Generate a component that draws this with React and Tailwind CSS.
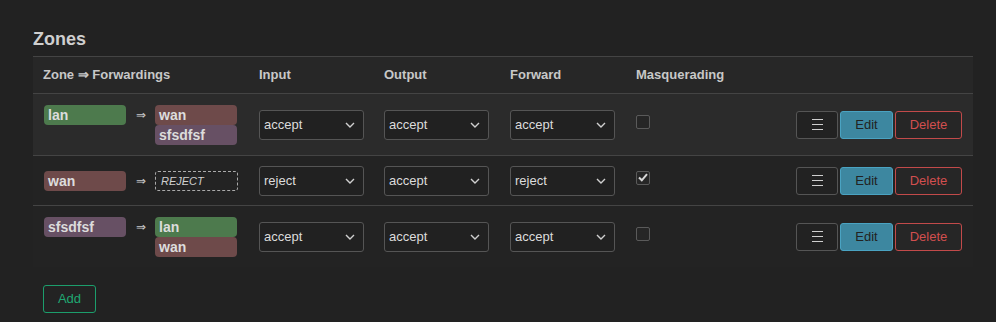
import React from 'react'

const zoneColors = {
  lan: 'bg-[#4d7a4d]',
  wan: 'bg-[#6e4a4a]',
  sfsdfsf: 'bg-[#675064]',
}

const zones = [
  { name: 'lan', fwd: ['wan', 'sfsdfsf'], input: 'accept', output: 'accept', forward: 'accept', masq: false, bg: 'bg-[#2b2b2b]' },
  { name: 'wan', fwd: [], input: 'reject', output: 'accept', forward: 'reject', masq: true, bg: 'bg-[#232323]' },
  { name: 'sfsdfsf', fwd: ['lan', 'wan'], input: 'accept', output: 'accept', forward: 'accept', masq: false, bg: 'bg-[#232323]' },
]

function Badge({ name }) {
  return (
    <div className={`w-[82px] h-[20px] rounded-[4px] px-[4px] text-[14px] leading-[20px] font-bold text-[#dcdcdc] ${zoneColors[name]}`}>
      {name}
    </div>
  )
}

function Select({ value }) {
  return (
    <div className="w-[105px] h-[30px] rounded-[3px] border border-[#555] bg-[#212121] flex items-center justify-between pl-[4px] pr-[8px] text-[13px] text-[#dcdcdc]">
      <span>{value}</span>
      <svg width="10" height="6" viewBox="0 0 10 6" fill="none" stroke="#d0d0d0" strokeWidth="1.4">
        <path d="M1 1l4 4 4-4" />
      </svg>
    </div>
  )
}

function Checkbox({ checked }) {
  return (
    <div className="w-[14px] h-[14px] rounded-[2px] border border-[#5a5a5a] bg-[#262626] flex items-center justify-center">
      {checked && (
        <svg width="10" height="9" viewBox="0 0 10 9" fill="none" stroke="#d8d8d8" strokeWidth="2">
          <path d="M1 4.5l2.8 2.8L9 1.2" />
        </svg>
      )}
    </div>
  )
}

export default function App() {
  return (
    <div className="min-h-[322px] bg-[#222222] pl-[33px] pt-[28px] font-['Liberation_Sans',Arial,sans-serif]">
      <h2 className="text-[18px] font-bold text-[#cfcfcf] leading-[22px] mb-[6px]">Zones</h2>

      <div className="w-[940px]">
        <div className="flex items-center h-[37px] border-t border-[#444] bg-[#272727] text-[13px] font-bold text-[#c8c8c8]">
          <div className="w-[226px] pl-[10px]">Zone ⇒ Forwardings</div>
          <div className="w-[125px]">Input</div>
          <div className="w-[126px]">Output</div>
          <div className="w-[126px]">Forward</div>
          <div className="flex-1">Masquerading</div>
        </div>

        {zones.map((z) => (
          <div key={z.name} className={`flex items-center border-t border-[#444] py-[9.5px] ${z.bg}`}>
            <div className="w-[226px] pl-[11px] py-[1px] flex items-start">
              <Badge name={z.name} />
              <span className="w-[29px] text-center text-[12px] leading-[20px] text-[#c8c8c8]">⇒</span>
              <div className="flex flex-col">
                {z.fwd.length ? (
                  z.fwd.map((f) => <Badge key={f} name={f} />)
                ) : (
                  <div className="w-[83px] h-[20px] border border-dashed border-[#aaa] rounded-[3px] px-[5px] text-[11px] leading-[18px] italic text-[#cfcfcf]">
                    REJECT
                  </div>
                )}
              </div>
            </div>
            <div className="w-[125px]"><Select value={z.input} /></div>
            <div className="w-[126px]"><Select value={z.output} /></div>
            <div className="w-[126px]"><Select value={z.forward} /></div>
            <div className="flex-1 mb-[6px]"><Checkbox checked={z.masq} /></div>
            <div className="flex gap-[2px] pr-[11px]">
              <button className="w-[42px] h-[28px] rounded-[3px] border border-[#555] bg-[#222] flex items-center justify-center">
                <svg width="11" height="11" viewBox="0 0 11 11" stroke="#cfcfcf" strokeWidth="1">
                  <path d="M0 0.5h11M0 5.5h11M0 10.5h11" />
                </svg>
              </button>
              <button className="w-[53px] h-[28px] rounded-[3px] border border-[#4aa3c2] bg-[#3d87a0] text-[#222] text-[13px]">Edit</button>
              <button className="w-[67px] h-[28px] rounded-[3px] border border-[#c24a4a] bg-[#262626] text-[#d24f4f] text-[13px]">Delete</button>
            </div>
          </div>
        ))}
      </div>

      <button className="mt-[18px] ml-[10px] w-[53px] h-[28px] rounded-[3px] border border-[#1c9e6c] bg-[#232323] text-[#20a872] text-[13px]">
        Add
      </button>
    </div>
  )
}
